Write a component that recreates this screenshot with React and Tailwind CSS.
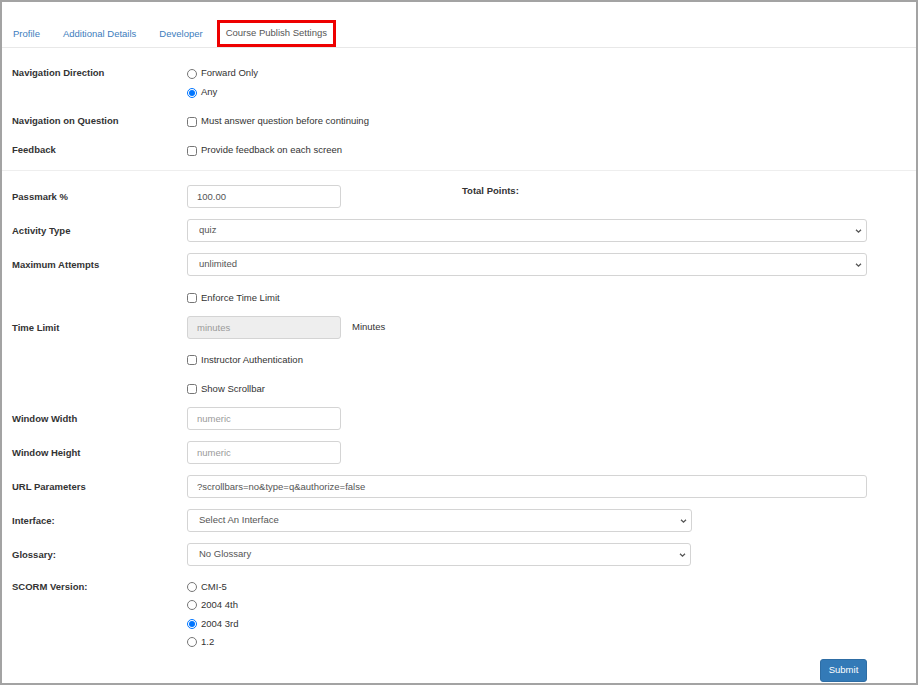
import React from "react";

const font = { fontFamily: '"Liberation Sans", Arial, sans-serif' };

function Chevron() {
  return (
    <svg
      className="pointer-events-none absolute right-[5px] top-1/2 -translate-y-1/2"
      width="7"
      height="5"
      viewBox="0 0 7 5"
    >
      <path d="M1 1.2 L3.5 3.7 L6 1.2" fill="none" stroke="#555" strokeWidth="1.3" />
    </svg>
  );
}

function Select({ value, width }) {
  return (
    <div className={`relative h-[23px] ${width}`}>
      <select
        defaultValue={value}
        className="block h-[23px] w-full appearance-none rounded-[3px] border border-[#d4d4d4] bg-white pl-[11px] text-[9.5px] text-[#555] outline-none"
        style={font}
      >
        <option>{value}</option>
      </select>
      <Chevron />
    </div>
  );
}

function TextInput({ value, placeholder, width, disabled }) {
  return (
    <input
      type="text"
      defaultValue={value}
      placeholder={placeholder}
      disabled={disabled}
      className={`block h-[23px] ${width} rounded-[3px] border border-[#d4d4d4] px-[9px] text-[9.5px] text-[#555] placeholder:text-[#9a9a9a] outline-none ${
        disabled ? "bg-[#eeeeee]" : "bg-white"
      }`}
      style={font}
    />
  );
}

function Label({ children }) {
  return (
    <div className="flex w-[175px] shrink-0 items-center pt-[1px] text-[9.5px] font-bold text-[#333]">
      {children}
    </div>
  );
}

function Check({ label, h = "h-[18px]" }) {
  return (
    <label className={`flex ${h} items-center text-[9.5px] text-[#333]`}>
      <input type="checkbox" className="m-0 mr-[4px] h-[10px] w-[10px]" />
      {label}
    </label>
  );
}

function Radio({ label, name, checked, h }) {
  return (
    <label className={`flex ${h} items-center text-[9.5px] text-[#333]`}>
      <input
        type="radio"
        name={name}
        defaultChecked={checked}
        className="m-0 mr-[4px] h-[10px] w-[10px]"
      />
      {label}
    </label>
  );
}

export default function App() {
  return (
    <div className="h-[686px] w-[919px] bg-white" style={font}>
      <div className="h-[685px] w-[918px] border-2 border-[#a3a3a3] bg-white">
        {/* Tabs */}
        <div className="mt-[18px] flex items-end gap-[5px] border-b border-[#e8e8e8] pl-[2px]">
          <div className="flex h-[27px] items-center px-[9px] pt-[1px] text-[9.5px] text-[#3d7dbd]">Profile</div>
          <div className="flex h-[27px] items-center px-[9px] pt-[1px] text-[9.5px] text-[#3d7dbd]">Additional Details</div>
          <div className="flex h-[27px] items-center px-[9px] pt-[1px] text-[9.5px] text-[#3d7dbd]">Developer</div>
          <div className="flex h-[27px] items-center border-[3px] border-[#ee0000] px-[6px] text-[9.5px] text-[#555]">
            Course Publish Settings
          </div>
        </div>

        {/* Section 1 */}
        <div className="border-b border-[#eeeeee] pb-[10px] pl-[10px] pt-[16px]">
          <div className="flex">
            <div className="flex h-[19px] w-[175px] items-center text-[9.5px] font-bold text-[#333]">
              Navigation Direction
            </div>
            <div className="flex flex-col">
              <Radio label="Forward Only" name="nav" h="h-[19px]" />
              <Radio label="Any" name="nav" checked h="h-[19px]" />
            </div>
          </div>
          <div className="mt-[10px] flex">
            <div className="flex h-[19px] w-[175px] items-center text-[9.5px] font-bold text-[#333]">
              Navigation on Question
            </div>
            <Check label="Must answer question before continuing" h="h-[19px]" />
          </div>
          <div className="mt-[10px] flex">
            <div className="flex h-[19px] w-[175px] items-center text-[9.5px] font-bold text-[#333]">
              Feedback
            </div>
            <Check label="Provide feedback on each screen" h="h-[19px]" />
          </div>
        </div>

        {/* Section 2 */}
        <div className="w-[865px] pl-[10px] pt-[14px]">
          <div className="flex h-[23px]">
            <Label>Passmark %</Label>
            <TextInput value="100.00" width="w-[154px]" />
            <div className="ml-[121px] self-start text-[9.5px] font-bold leading-[12px] text-[#333]">
              Total Points:
            </div>
          </div>

          <div className="mt-[11px] flex h-[23px]">
            <Label>Activity Type</Label>
            <div className="flex-1">
              <Select value="quiz" width="w-full" />
            </div>
          </div>

          <div className="mt-[11px] flex h-[23px]">
            <Label>Maximum Attempts</Label>
            <div className="flex-1">
              <Select value="unlimited" width="w-full" />
            </div>
          </div>

          <div className="mt-[13px] flex h-[18px]">
            <div className="w-[175px] shrink-0" />
            <Check label="Enforce Time Limit" />
          </div>

          <div className="mt-[9px] flex h-[23px] items-center">
            <Label>Time Limit</Label>
            <TextInput placeholder="minutes" width="w-[154px]" disabled />
            <div className="ml-[11px] text-[9.5px] text-[#333]">Minutes</div>
          </div>

          <div className="mt-[12px] flex h-[18px]">
            <div className="w-[175px] shrink-0" />
            <Check label="Instructor Authentication" />
          </div>

          <div className="mt-[11px] flex h-[18px]">
            <div className="w-[175px] shrink-0" />
            <Check label="Show Scrollbar" />
          </div>

          <div className="mt-[9px] flex h-[23px]">
            <Label>Window Width</Label>
            <TextInput placeholder="numeric" width="w-[154px]" />
          </div>

          <div className="mt-[11px] flex h-[23px]">
            <Label>Window Height</Label>
            <TextInput placeholder="numeric" width="w-[154px]" />
          </div>

          <div className="mt-[11px] flex h-[23px]">
            <Label>URL Parameters</Label>
            <div className="flex-1">
              <input
                type="text"
                defaultValue="?scrollbars=no&type=q&authorize=false"
                className="block h-[23px] w-full rounded-[3px] border border-[#d4d4d4] bg-white px-[9px] text-[9.5px] text-[#555] outline-none"
                style={font}
              />
            </div>
          </div>

          <div className="mt-[11px] flex h-[23px]">
            <Label>Interface:</Label>
            <Select value="Select An Interface" width="w-[505px]" />
          </div>

          <div className="mt-[11px] flex h-[23px]">
            <Label>Glossary:</Label>
            <Select value="No Glossary" width="w-[504px]" />
          </div>

          <div className="mt-[12px] flex">
            <div className="flex h-[18px] w-[175px] items-center text-[9.5px] font-bold text-[#333]">
              SCORM Version:
            </div>
            <div className="flex flex-col">
              <Radio label="CMI-5" name="scorm" h="h-[18px]" />
              <Radio label="2004 4th" name="scorm" h="h-[18.5px]" />
              <Radio label="2004 3rd" name="scorm" checked h="h-[18.5px]" />
              <Radio label="1.2" name="scorm" h="h-[18px]" />
            </div>
          </div>

          <div className="mt-[8px] flex justify-end">
            <button
              className="h-[23px] w-[47px] rounded-[3px] border border-[#2e6da4] bg-[#337ab7] text-[9.5px] text-white"
              style={font}
            >
              Submit
            </button>
          </div>
        </div>
      </div>
    </div>
  );
}
